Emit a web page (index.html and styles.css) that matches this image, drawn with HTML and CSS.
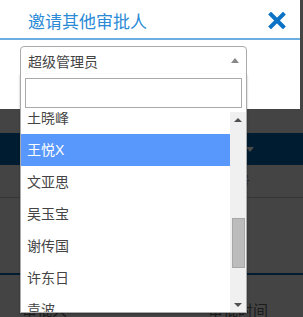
FILE: index.html
```html
<!DOCTYPE html>
<html>
<head>
	<meta charset="UTF-8" />
	<title>邀请其他审批人</title>
	<link rel="stylesheet" href="styles.css">
</head>
<body>

    <div id="page">
        <div class="table_head">
            <span class="caret"></span>
        </div>
        <div class="table_row">
            <span class="cell_tail">号</span>
        </div>
        <div class="table_line"></div>
        <div class="table_foot">
            <span class="foot_left">审批人</span>
            <span class="foot_right">审批时间</span>
        </div>
    </div>

    <div id="modal">
        <div class="modal_head">
            <span class="modal_title">邀请其他审批人</span>
            <svg class="modal_close" width="18" height="17" viewBox="0 0 18 17">
                <path d="M3 2.5 L15 14.5 M15 2.5 L3 14.5" stroke="#0b72c6" stroke-width="4" stroke-linecap="square" fill="none"/>
            </svg>
        </div>
        <div class="field">
            <div class="select_box">
                <span class="select_text">超级管理员</span>
                <span class="select_arrow"></span>
            </div>
            <div class="dropdown">
                <div class="search_wrap">
                    <input class="search_input" type="text" />
                </div>
                <div class="results_wrap">
                    <ul class="results" id="results">
                        <li>陈建国</li>
                        <li>陈雪梅</li>
                        <li>邓海涛</li>
                        <li>冯志强</li>
                        <li>何丽娜</li>
                        <li>黄伟</li>
                        <li>李明</li>
                        <li>刘洋</li>
                        <li>马俊</li>
                        <li>孙涛</li>
                        <li>唐静</li>
                        <li>土晓峰</li>
                        <li class="active">王悦X</li>
                        <li>文亚思</li>
                        <li>吴玉宝</li>
                        <li>谢传国</li>
                        <li>许东日</li>
                        <li>袁波</li>
                        <li>张磊</li>
                        <li>赵敏</li>
                        <li>周杰</li>
                    </ul>
                    <div class="scrollbar">
                        <div class="sb_btn"><span class="sb_up"></span></div>
                        <div class="sb_track"><div class="sb_thumb"></div></div>
                        <div class="sb_btn"><span class="sb_down"></span></div>
                    </div>
                </div>
            </div>
        </div>
    </div>

    <script src="script.js"></script>
</body>
</html>
```

FILE: styles.css
```css
html, body{
    margin: 0;
    padding: 0;
}

body{
    width: 303px;
    height: 317px;
    overflow: hidden;
    background: #444;
    font-family: "Liberation Sans", "Noto Sans CJK SC", sans-serif;
    font-size: 14px;
    position: relative;
}

/* page behind the overlay */
#page{
    padding-top: 133px;
}

.table_head{
    height: 32px;
    background: #001c31;
    position: relative;
}

.table_head .caret{
    position: absolute;
    left: 246px;
    top: 14px;
    border-style: solid;
    border-width: 5px 4px 0 4px;
    border-color: #4a4a4a transparent transparent transparent;
}

.table_row{
    height: 32px;
    border-bottom: 1px solid #363636;
    color: #222;
    font-size: 13px;
    line-height: 32px;
    padding-left: 237px;
}

.table_line{
    height: 2px;
    margin-top: 75px;
    background: #001c31;
}

.table_foot{
    display: flex;
    padding: 24px 0 0 22px;
    color: #1c1c1c;
    font-size: 15px;
}

.foot_right{
    margin-left: 141px;
}

/* modal */
#modal{
    position: absolute;
    left: 0;
    top: 0;
    width: 300px;
    height: 109px;
    background: #fff;
}

.modal_head{
    display: flex;
    align-items: center;
    justify-content: space-between;
    height: 38px;
    padding: 0 14px 0 28px;
    border-bottom: 2px solid #6aaee2;
}

.modal_title{
    color: #2a8ad6;
    font-size: 17px;
    padding-top: 2px;
}

.modal_close{
    margin-top: 3px;
}

.field{
    position: relative;
    margin: 6px 0 0 20px;
    width: 227px;
}

.select_box{
    height: 27px;
    border: 1px solid #aaa;
    border-radius: 4px 4px 0 0;
    display: flex;
    align-items: center;
    justify-content: space-between;
    padding: 0 7px 0 7px;
    color: #444;
}

.select_arrow{
    border-style: solid;
    border-width: 0 4px 5px 4px;
    border-color: transparent transparent #888 transparent;
}

.dropdown{
    position: absolute;
    left: 0;
    top: 28px;
    width: 225px;
    border: 1px solid #aaa;
    border-top: none;
    background: #fff;
    box-shadow: 0 1px 2px rgba(0,0,0,0.3);
}

.search_wrap{
    padding: 4px;
}

.search_input{
    display: block;
    box-sizing: border-box;
    width: 100%;
    height: 30px;
    margin: 0;
    border: 1px solid #aaa;
    outline: none;
}

.results_wrap{
    display: flex;
    height: 200px;
}

.results{
    flex: 1;
    list-style: none;
    margin: 0;
    padding: 0;
    overflow: hidden;
}

.results li{
    padding: 6px;
    line-height: 20px;
    color: #444;
}

.results li.active{
    background: #5897fb;
    color: #fff;
}

/* scrollbar */
.scrollbar{
    width: 16px;
    background: #f0f0f0;
    display: flex;
    flex-direction: column;
}

.sb_btn{
    height: 15px;
    display: flex;
    justify-content: center;
    align-items: center;
}

.sb_up{
    border-style: solid;
    border-width: 0 4px 4px 4px;
    border-color: transparent transparent #505050 transparent;
}

.sb_down{
    border-style: solid;
    border-width: 4px 4px 0 4px;
    border-color: #505050 transparent transparent transparent;
}

.sb_track{
    flex: 1;
}

.sb_thumb{
    margin: 91px 1px 0 2px;
    height: 48px;
    background: #bcbcbc;
    border: 1px solid #a8a8a8;
}
```

FILE: script.js
```js
~function(){
    var list = document.getElementById('results');
    list.scrollTop = 32 * 11 + 10;
}();
```
